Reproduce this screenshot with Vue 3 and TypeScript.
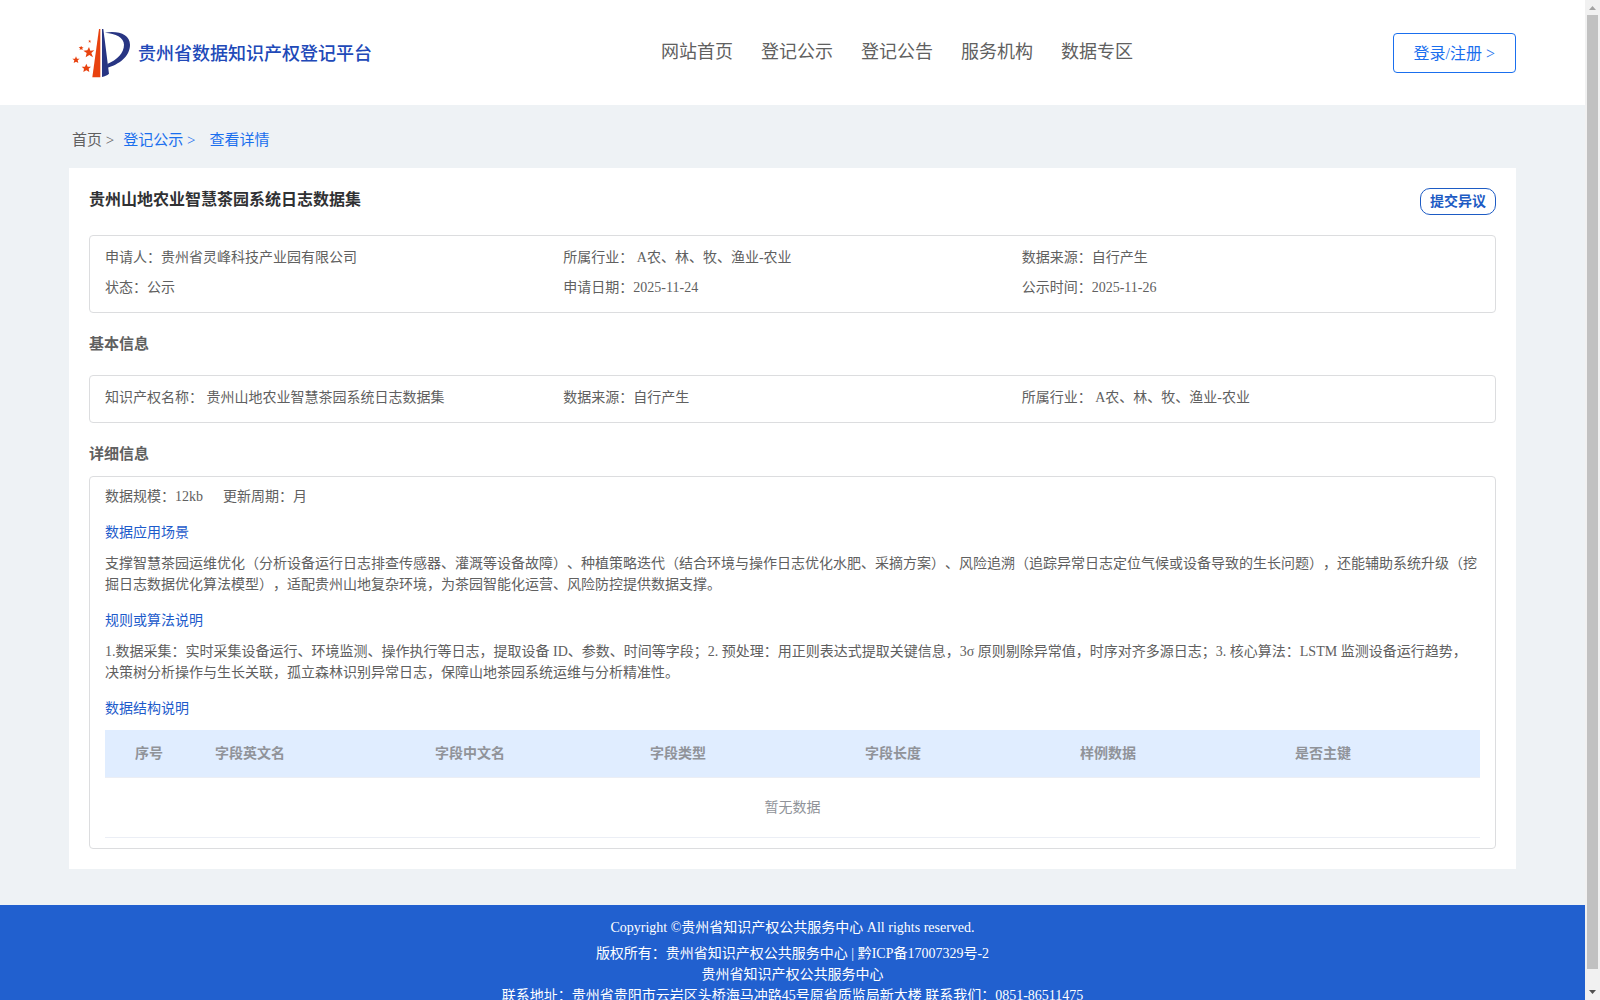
<script setup lang="ts">
interface Field {
  label: string
  value: string
}

interface Column {
  title: string
  width: number
}

// Full-width punctuation used throughout the Chinese copy
const colon = '\uff1a'

const navItems: string[] = ['网站首页', '登记公示', '登记公告', '服务机构', '数据专区']

const summary: Field[] = [
  { label: '申请人', value: '贵州省灵峰科技产业园有限公司' },
  { label: '所属行业', value: ' A农、林、牧、渔业-农业' },
  { label: '数据来源', value: '自行产生' },
  { label: '状态', value: '公示' },
  { label: '申请日期', value: '2025-11-24' },
  { label: '公示时间', value: '2025-11-26' },
]

const basics: Field[] = [
  { label: '知识产权名称', value: ' 贵州山地农业智慧茶园系统日志数据集' },
  { label: '数据来源', value: '自行产生' },
  { label: '所属行业', value: ' A农、林、牧、渔业-农业' },
]

const scene =
  '支撑智慧茶园运维优化\uff08分析设备运行日志排查传感器、灌溉等设备故障\uff09、种植策略迭代\uff08结合环境与操作日志优化水肥、采摘方案\uff09、' +
  '风险追溯\uff08追踪异常日志定位气候或设备导致的生长问题\uff09\uff0c还能辅助系统升级\uff08挖掘日志数据优化算法模型\uff09\uff0c' +
  '适配贵州山地复杂环境\uff0c为茶园智能化运营、风险防控提供数据支撑。'

const algorithm =
  '1.数据采集\uff1a实时采集设备运行、环境监测、操作执行等日志\uff0c提取设备 ID、参数、时间等字段\uff1b' +
  '2. 预处理\uff1a用正则表达式提取关键信息\uff0c3σ 原则剔除异常值\uff0c时序对齐多源日志\uff1b' +
  '3. 核心算法\uff1aLSTM 监测设备运行趋势\uff0c决策树分析操作与生长关联\uff0c孤立森林识别异常日志\uff0c保障山地茶园系统运维与分析精准性。'

const columns: Column[] = [
  { title: '序号', width: 100 },
  { title: '字段英文名', width: 220 },
  { title: '字段中文名', width: 215 },
  { title: '字段类型', width: 215 },
  { title: '字段长度', width: 215 },
  { title: '样例数据', width: 215 },
  { title: '是否主键', width: 195 },
]
</script>

<template>
  <div class="window">
    <div class="page">
      <header class="header">
        <a class="brand" href="#">
          <svg class="logo" viewBox="36 54 174 150" aria-hidden="true">
            <g fill="#e8420f">
              <path d="M117 57h4v145h-24z" />
              <path d="M87 111l4 11 12-1-9 8 5 13-11-7-11 7 3-13-10-7 12-1z" />
              <path d="M48 139l3 7h8l-6 5 2 8-7-4-7 4 2-8-6-5h8z" />
              <path d="M79 161l4 9h10l-7 6 2 10-9-5-9 5 2-10-7-6h10z" />
              <path d="M64 108l2 4h5l-4 3 1 5-5-2-4 2 1-5-4-4 5 0z" />
              <path d="M89 89l1 3h4l-3 2 1 4-3-2-3 2 1-4-3-2h4z" />
            </g>
            <g fill="#283583">
              <path d="M126 57h4l17 134c-6 5-13 8-21 10z" />
              <path d="M135 68c42-7 75 7 75 36 0 36-34 59-67 69l-1-11c29-13 50-33 50-58 0-22-25-34-57-36z" />
            </g>
          </svg>
          <span class="brand-name">贵州省数据知识产权登记平台</span>
        </a>
        <nav class="nav">
          <a v-for="item in navItems" :key="item" href="#">{{ item }}</a>
        </nav>
        <button class="login" type="button">登录/注册 &gt;</button>
      </header>

      <main class="main">
        <nav class="crumbs" aria-label="面包屑">
          <a class="home" href="#">首页 &gt;</a>
          <a class="parent" href="#">登记公示 &gt;</a>
          <a href="#">查看详情</a>
        </nav>

        <article class="card">
          <div class="card-head">
            <h1>贵州山地农业智慧茶园系统日志数据集</h1>
            <button class="object" type="button">提交异议</button>
          </div>

          <section class="box fields">
            <div v-for="f in summary" :key="f.label" class="field">{{ f.label }}{{ colon }}{{ f.value }}</div>
          </section>

          <h2 class="basic-title">基本信息</h2>
          <section class="box fields">
            <div v-for="f in basics" :key="f.label" class="field">{{ f.label }}{{ colon }}{{ f.value }}</div>
          </section>

          <h2 class="detail-title">详细信息</h2>
          <section class="box detail">
            <div class="scale">
              <span>数据规模{{ colon }}12kb</span>
              <span>更新周期{{ colon }}月</span>
            </div>
            <h3>数据应用场景</h3>
            <p>{{ scene }}</p>
            <h3>规则或算法说明</h3>
            <p>{{ algorithm }}</p>
            <h3>数据结构说明</h3>
            <table>
              <colgroup>
                <col v-for="c in columns" :key="c.title" :style="{ width: c.width + 'px' }" />
              </colgroup>
              <thead>
                <tr>
                  <th v-for="c in columns" :key="c.title" scope="col">{{ c.title }}</th>
                </tr>
              </thead>
              <tbody>
                <tr>
                  <td :colspan="columns.length">暂无数据</td>
                </tr>
              </tbody>
            </table>
          </section>
        </article>
      </main>

      <footer class="footer">
        <p class="copyright">Copyright ©贵州省知识产权公共服务中心 All rights reserved.</p>
        <p>版权所有{{ colon }}贵州省知识产权公共服务中心 | 黔ICP备17007329号-2</p>
        <p>贵州省知识产权公共服务中心</p>
        <p>联系地址{{ colon }}贵州省贵阳市云岩区头桥海马冲路45号原省质监局新大楼 联系我们{{ colon }}0851-86511475</p>
      </footer>
    </div>

    <div class="rail" aria-hidden="true">
      <svg viewBox="0 0 15 15"><path d="M4 10h7L7.500 6z" fill="#a3a3a3" /></svg>
      <div class="track"><div class="thumb"></div></div>
      <svg viewBox="0 0 15 15"><path d="M4 5h7L7.500 9z" fill="#505050" /></svg>
    </div>
  </div>
</template>

<style>
body {
  margin: 0;
}
</style>

<style scoped>
.window {
  display: flex;
  height: 100vh;
  overflow: hidden;
}
.page {
  flex: 1;
  min-width: 0;
  overflow-x: hidden;
  overflow-y: auto;
  scrollbar-width: none;
  background: #eef2f5;
  color: #606060;
  font: 14px/21px "Liberation Serif", "Noto Sans CJK SC", serif;
  text-spacing-trim: space-all;
}
.rail {
  display: flex;
  flex-direction: column;
  width: 15px;
  background: #f1f1f1;
}
.rail svg {
  flex: none;
  width: 15px;
  height: 15px;
}
.track {
  flex: 1;
  padding: 0 2px;
}
.thumb {
  height: 98.4%;
  background: #c1c1c1;
}
h1,
h2,
h3,
p {
  margin: 0;
}
a {
  color: inherit;
  text-decoration: none;
}
button {
  box-sizing: border-box;
  background: #fff;
  font-family: inherit;
  cursor: pointer;
}
.header {
  display: grid;
  grid-template-columns: 1fr auto 1fr;
  align-items: center;
  box-sizing: border-box;
  height: 105px;
  padding: 0 69px;
  background: #fff;
}
.brand {
  display: flex;
  align-items: center;
  gap: 8px;
  margin-left: 3px;
  color: #2149b8;
  font-size: 18px;
  font-weight: 500;
  white-space: nowrap;
}
.brand-name {
  padding-top: 4px;
}
.logo {
  width: 58px;
  height: 50px;
}
.nav {
  display: flex;
  gap: 28px;
  margin-left: 209px;
  font-size: 18px;
  white-space: nowrap;
}
.login {
  justify-self: end;
  height: 40px;
  padding: 0 20px 2px;
  border: 1px solid #1a6fee;
  border-radius: 4px;
  color: #1a6fee;
  font-size: 16px;
}
.main {
  padding: 0 69px 36px;
}
.crumbs {
  display: flex;
  align-items: center;
  box-sizing: border-box;
  height: 63px;
  padding: 8px 3px 0;
  color: #1a6fee;
  font-size: 15px;
}
.home {
  margin-right: 9px;
  color: #606060;
}
.parent {
  margin-right: 14px;
}
.card {
  padding: 20px;
  background: #fff;
}
.card-head {
  display: flex;
  justify-content: space-between;
  align-items: flex-start;
  height: 47px;
}
h1 {
  color: #303133;
  font-size: 16px;
  line-height: 24px;
}
.object {
  height: 27px;
  padding: 0 9px;
  border: 1px solid #1d5bc4;
  border-radius: 10px;
  color: #1d5bc4;
  font-size: 14px;
  font-weight: 700;
  line-height: 21px;
}
.box {
  padding: 0 15px;
  border: 1px solid #dcdddf;
  border-radius: 4px;
}
.fields {
  display: grid;
  grid-template-columns: repeat(3, 1fr);
  padding-top: 7px;
  padding-bottom: 9px;
}
.field {
  line-height: 30px;
}
h2 {
  font-size: 15px;
  line-height: 20px;
}
.basic-title {
  padding: 21px 0;
}
.detail-title {
  padding: 21px 0 12px;
}
.detail {
  padding-top: 9px;
  padding-bottom: 10px;
}
.scale {
  display: flex;
  gap: 20px;
}
h3 {
  padding: 15px 0 10px;
  color: #1d5bcb;
  font-size: 14px;
  font-weight: 400;
  line-height: 21px;
}
table {
  width: 100%;
  margin-top: 1px;
  border-collapse: collapse;
  table-layout: fixed;
}
th {
  height: 46px;
  padding: 0 10px 1px;
  background: #e0edff;
  border-bottom: 1px solid #ebeef5;
  color: #909399;
  text-align: left;
}
th:first-child {
  padding-left: 30px;
}
td {
  height: 58px;
  padding: 0 0 1px;
  border-bottom: 1px solid #ebeef5;
  color: #909399;
  text-align: center;
}
.footer {
  padding: 12px 0 11px;
  background: #2160cf;
  color: #fff;
  text-align: center;
}
.copyright {
  padding-bottom: 5px;
}
</style>
